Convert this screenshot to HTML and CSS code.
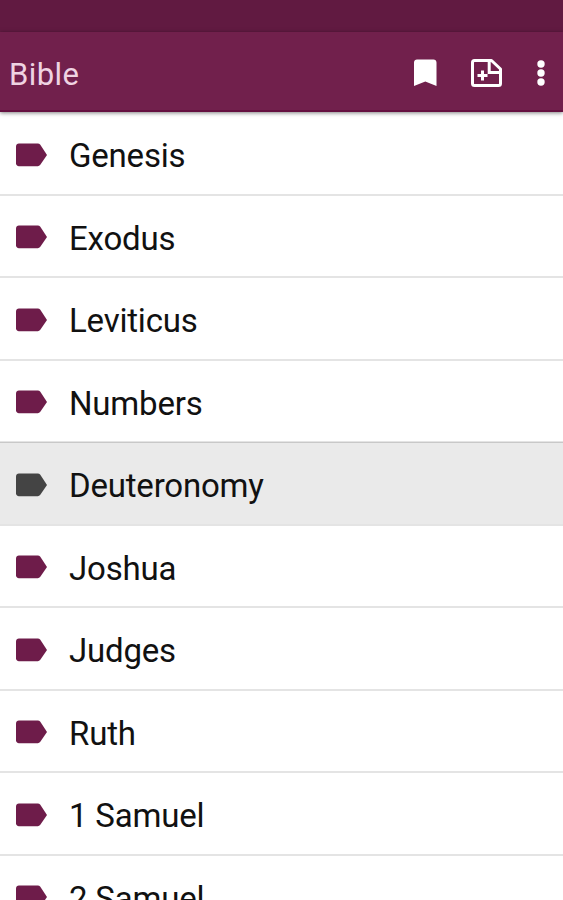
FILE: index.html
```html
<!doctype html>
<html lang="en">
  <head>
    <meta charset="utf-8">
    <title>Bible</title>
    <link rel="stylesheet" href="styles.css">
  </head>

  <body>
    <!-- shared label icon -->
    <svg class="defs" width="0" height="0">
      <symbol id="label" viewBox="0 0 32 24">
        <path d="M3 0h19.500c1 0 1.800.4 2.400 1.200L32 12l-7.100 10.300c-.6.800-1.400 1.200-2.400 1.200H3c-1.700 0-3-1.300-3-3V3c0-1.700 1.300-3 3-3z"/>
      </symbol>
    </svg>

    <div class="status-bar"></div>

    <header class="toolbar">
      <h1>Bible</h1>
      <div class="actions">
        <svg class="bookmark" width="23" height="28" viewBox="0 0 23 28">
          <path fill="#fff" d="M3 .5h16.500c1.700 0 3 1.300 3 3v23.500l-11.200-4.500L0 27V3.500c0-1.700 1.300-3 3-3z"/>
        </svg>
        <svg class="add-note" width="31" height="28" viewBox="0 0 31 28">
          <path fill="none" stroke="#fff" stroke-width="3" stroke-linejoin="round" d="M3.500 1.500h17l9 8.500v14.500c0 1.100-.9 2-2 2h-24c-1.100 0-2-.9-2-2v-21c0-1.100.9-2 2-2z"/>
          <path fill="none" stroke="#fff" stroke-width="3" d="M18.200 2v11.500H29M11.500 11.500v10M6.500 16.500h10"/>
        </svg>
        <svg class="more" width="8" height="26" viewBox="0 0 8 26">
          <circle fill="#fff" cx="4" cy="4" r="3.700"/>
          <circle fill="#fff" cx="4" cy="13" r="3.700"/>
          <circle fill="#fff" cx="4" cy="22" r="3.700"/>
        </svg>
      </div>
    </header>

    <ul class="books">
      <li><svg class="label"><use href="#label"/></svg><span>Genesis</span></li>
      <li><svg class="label"><use href="#label"/></svg><span>Exodus</span></li>
      <li><svg class="label"><use href="#label"/></svg><span>Leviticus</span></li>
      <li><svg class="label"><use href="#label"/></svg><span>Numbers</span></li>
      <li class="selected"><svg class="label"><use href="#label"/></svg><span>Deuteronomy</span></li>
      <li><svg class="label"><use href="#label"/></svg><span>Joshua</span></li>
      <li><svg class="label"><use href="#label"/></svg><span>Judges</span></li>
      <li><svg class="label"><use href="#label"/></svg><span>Ruth</span></li>
      <li><svg class="label"><use href="#label"/></svg><span>1 Samuel</span></li>
      <li><svg class="label"><use href="#label"/></svg><span>2 Samuel</span></li>
    </ul>
  </body>
</html>
```

FILE: styles.css
```css
* {
  box-sizing: border-box;
}

body {
  display: flex;
  flex-direction: column;
  height: 100vh;
  margin: 0;
  overflow: hidden;
  background-color: #fff;
  color: #111;
  font-family: Roboto, sans-serif;
}

.defs {
  display: none;
}

.status-bar {
  flex: none;
  height: 32px;
  background-color: #611a41;
}

/* Top bar */
.toolbar {
  display: flex;
  flex: none;
  align-items: center;
  justify-content: space-between;
  height: 80px;
  padding: 4px 18px 0 9px;
  background-color: #71204c;
  border-bottom: 2px solid #651040;
  box-shadow: 0 1px 4px rgba(0, 0, 0, 0.5);
  z-index: 1;
}

.toolbar h1 {
  margin: 0;
  padding-top: 2px;
  color: #efd3e2;
  font-size: 31px;
  font-weight: 400;
  letter-spacing: 0.4px;
}

.actions {
  display: flex;
  align-items: center;
}

.add-note {
  margin: 0 35px 0 34px;
}

/* Book list */
.books {
  margin: 0;
  padding: 1px 0 0;
  list-style: none;
}

.books li {
  display: flex;
  align-items: center;
  height: 82.5px;
  padding: 5px 16px 0;
  border-bottom: 2px solid #e4e4e4;
  font-size: 33px;
  letter-spacing: -0.2px;
}

.books .selected {
  background-color: #eaeaea;
  box-shadow: 0 -1px 0 #c8c8c8;
}

.label {
  flex: none;
  width: 31px;
  height: 24px;
  margin: 0 22px 2px 0;
  fill: #6e1c4a;
}

.selected .label {
  fill: #444;
}
```
